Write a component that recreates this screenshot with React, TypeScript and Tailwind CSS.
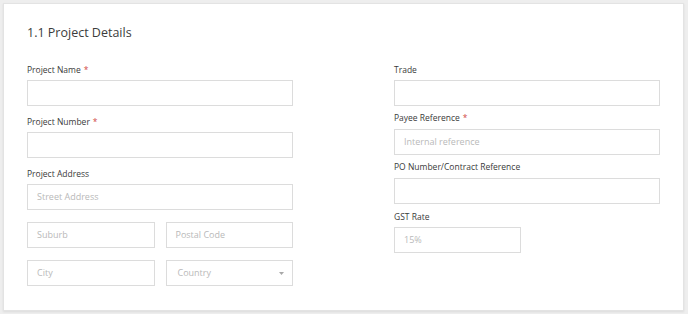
import React from "react";

const font = { fontFamily: '"Open Sans", "Liberation Sans", sans-serif' };

function Label({ text, req, className = "" }: { text: string; req?: boolean; className?: string }) {
  return (
    <div className={`h-[12px] leading-[12px] text-[8.5px] font-medium text-[#3a3a3a] whitespace-nowrap ${className}`}>
      {text}
      {req && <span className="text-[#d0473f] ml-[3px]">*</span>}
    </div>
  );
}

function Field({ placeholder, className = "", caret }: { placeholder?: string; className?: string; caret?: boolean }) {
  return (
    <div className={`h-[26px] border border-[#dcdcdc] bg-white flex items-center pl-[9px] pr-[8px] text-[9px] text-[#b9b9b9] ${className}`}>
      <span className="flex-1">{placeholder}</span>
      {caret && (
        <svg width="5" height="3" viewBox="0 0 5 3">
          <path d="M0 0 L5 0 L2.5 3 Z" fill="#a8a8a8" />
        </svg>
      )}
    </div>
  );
}

export default function App() {
  return (
    <div className="w-[688px] h-[314px] bg-[#eeeeee] p-[3px]" style={font}>
      <div className="w-[681px] h-[308px] bg-white border border-[#e3e3e3] shadow-[0_1px_2px_rgba(0,0,0,0.08)] px-[23px] pt-[20px]">
        <div className="text-[12.5px] leading-[18px] text-[#3c3c3c]">1.1 Project Details</div>
        <div className="mt-[22px] grid grid-cols-[266px_266px] gap-x-[101px]">
          <div className="flex flex-col">
            <Label text="Project Name" req className="mb-[4px]" />
            <Field />
            <Label text="Project Number" req className="mt-[10px] mb-[4px]" />
            <Field />
            <Label text="Project Address" className="mt-[10px] mb-[4px]" />
            <Field placeholder="Street Address" />
            <div className="mt-[12px] grid grid-cols-2 gap-x-[11px]">
              <Field placeholder="Suburb" />
              <Field placeholder="Postal Code" />
            </div>
            <div className="mt-[12px] grid grid-cols-2 gap-x-[11px]">
              <Field placeholder="City" />
              <Field placeholder="Country" caret className="pl-[11px]" />
            </div>
          </div>
          <div className="flex flex-col">
            <Label text="Trade" className="mb-[4px]" />
            <Field />
            <Label text="Payee Reference" req className="mt-[6px] mb-[5px]" />
            <Field placeholder="Internal reference" />
            <Label text="PO Number/Contract Reference" className="mt-[6px] mb-[5px]" />
            <Field />
            <Label text="GST Rate" className="mt-[7px] mb-[4px]" />
            <Field placeholder="15%" className="w-[127px]" />
          </div>
        </div>
      </div>
    </div>
  );
}
